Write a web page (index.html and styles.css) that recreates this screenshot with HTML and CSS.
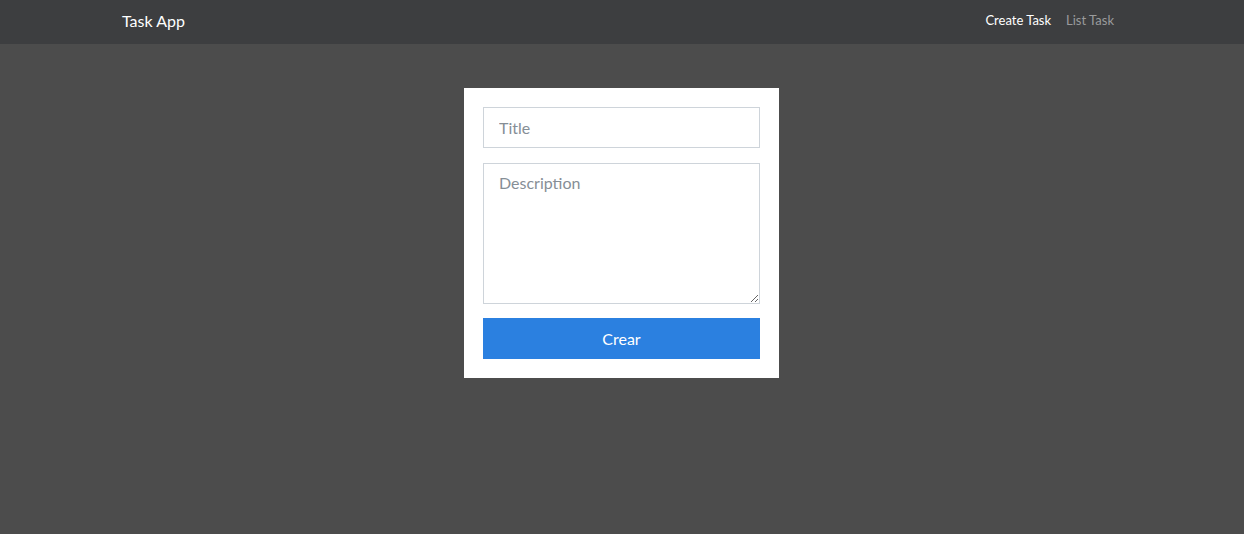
FILE: index.html
```html
<!DOCTYPE html>
<html>
<head>
<meta charset="utf-8">
<link rel="stylesheet" href="styles.css">
</head>
<body>
<nav class="navbar">
  <div class="nav-inner">
    <a class="brand">Task App</a>
    <div class="links">
      <a class="link active">Create Task</a>
      <a class="link">List Task</a>
    </div>
  </div>
</nav>
<main class="main">
  <form class="card">
    <input class="field" type="text" placeholder="Title">
    <textarea class="field area" placeholder="Description"></textarea>
    <button class="btn" type="button">Crear</button>
  </form>
</main>
</body>
</html>
```
FILE: styles.css
```css
html, body {
  margin: 0;
  padding: 0;
  height: 100%;
}
body {
  background: #4c4c4c;
  font-family: "Source Sans Pro", Lato, "Noto Sans", sans-serif;
}
.navbar {
  background: #3d3e40;
  height: 44px;
}
.nav-inner {
  box-sizing: border-box;
  width: 1000px;
  margin: 0 auto;
  height: 44px;
  padding-bottom: 4px;
  display: flex;
  align-items: center;
  justify-content: space-between;
}
.brand {
  color: #fff;
  font-size: 16px;
}
.links {
  display: flex;
}
.link {
  color: #9a9b9c;
  font-size: 13px;
  padding: 0 8px 0 7px;
}
.link.active {
  color: #fff;
}
.main {
  display: flex;
  justify-content: center;
  padding-top: 44px;
  padding-right: 1px;
}
.card {
  background: #fff;
  width: 277px;
  padding: 19px;
  display: flex;
  flex-direction: column;
}
.field {
  box-sizing: border-box;
  width: 100%;
  height: 41px;
  border: 1px solid #ced4da;
  border-radius: 0;
  padding: 0 15px;
  font-family: inherit;
  font-size: 16px;
  color: #495057;
  margin: 0;
  outline: none;
}
.field::placeholder {
  color: #868e96;
}
.area {
  height: 141px;
  margin-top: 15px;
  padding-top: 9px;
  resize: vertical;
  display: block;
}
.btn {
  margin-top: 14px;
  height: 41px;
  border: 0;
  background: #2b80e0;
  color: #fff;
  font-family: inherit;
  font-size: 16px;
  cursor: pointer;
}
```
